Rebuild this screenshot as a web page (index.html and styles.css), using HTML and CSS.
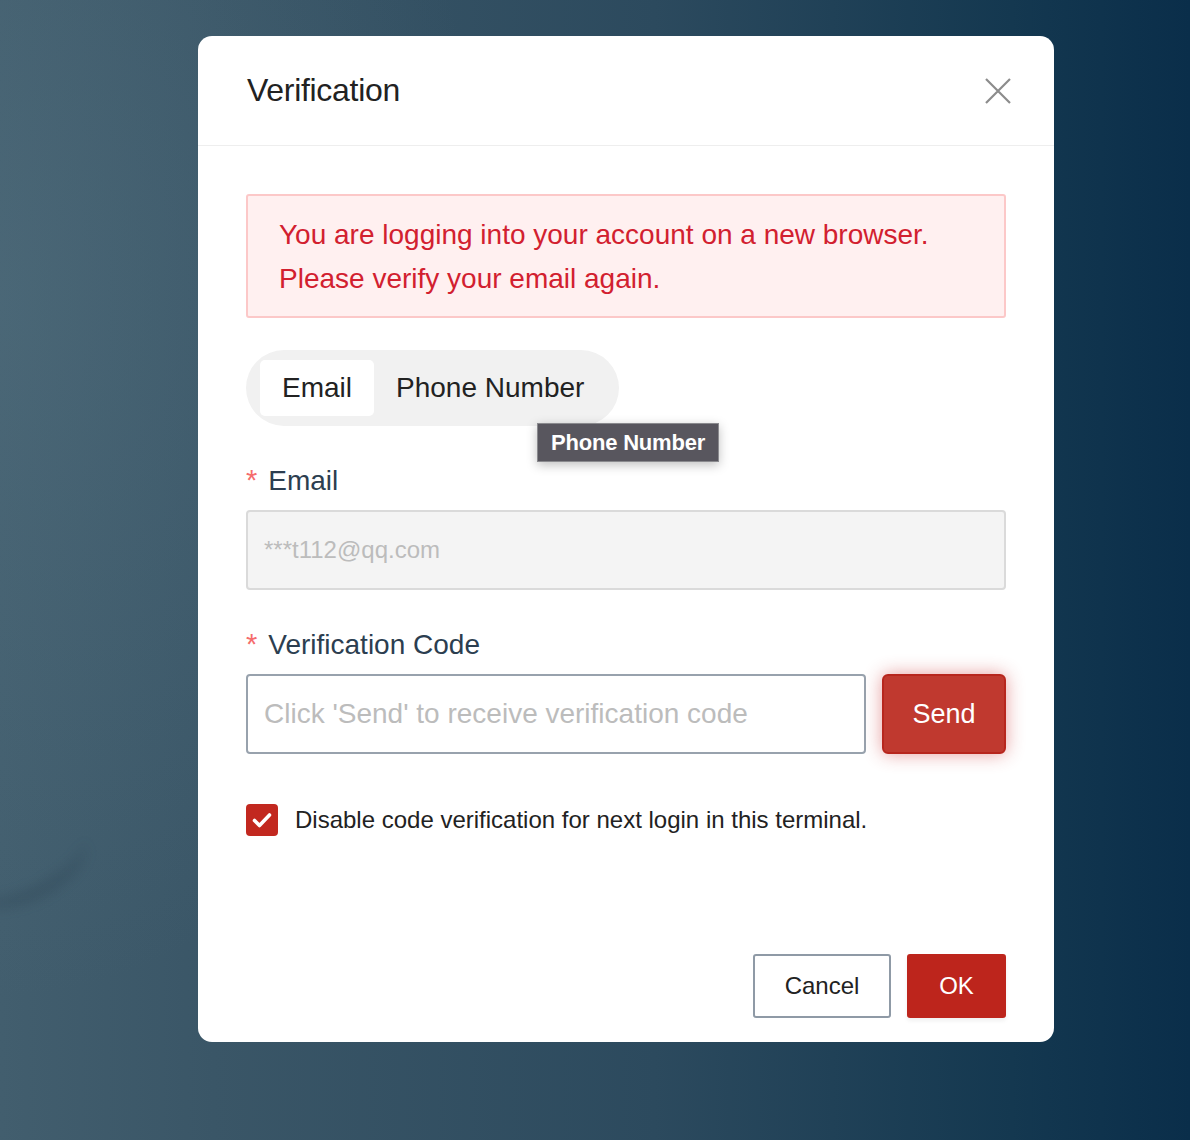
FILE: index.html
```html
<!DOCTYPE html>
<html>
<head>
<meta charset="utf-8">
<link rel="stylesheet" href="styles.css">
</head>
<body>
<div class="backdrop">
  <div class="swoosh"></div>
  <div class="dialog">
    <div class="dialog-header">
      <div class="dialog-title">Verification</div>
      <svg class="close" width="28" height="28" viewBox="0 0 28 28"><path d="M2 2 L26 26 M26 2 L2 26" stroke="#8c8c8c" stroke-width="2.2" fill="none"/></svg>
    </div>
    <div class="dialog-body">
      <div class="alert">You are logging into your account on a new browser.<br>Please verify your email again.</div>
      <div class="tabs-row">
        <div class="tabs">
          <div class="tab active">Email</div>
          <div class="tab">Phone Number</div>
        </div>
        <div class="tooltip">Phone Number</div>
      </div>
      <div class="field">
        <div class="label"><span class="req">*</span>Email</div>
        <div class="input disabled small">***t112@qq.com</div>
      </div>
      <div class="field">
        <div class="label"><span class="req">*</span>Verification Code</div>
        <div class="code-row">
          <div class="input code">Click 'Send' to receive verification code</div>
          <div class="send">Send</div>
        </div>
      </div>
      <div class="check-row">
        <span class="checkbox"><svg width="32" height="32" viewBox="0 0 32 32"><path d="M8.5 16.5 L13.5 21.5 L23.5 11" stroke="#fff" stroke-width="3.6" fill="none" stroke-linecap="round" stroke-linejoin="round"/></svg></span>
        <span class="check-text">Disable code verification for next login in this terminal.</span>
      </div>
    </div>
    <div class="dialog-footer">
      <div class="btn cancel">Cancel</div>
      <div class="btn ok">OK</div>
    </div>
  </div>
</div>
</body>
</html>
```
FILE: styles.css
```css
html, body {
  margin: 0;
  padding: 0;
}
body {
  font-family: "Liberation Sans", Arial, sans-serif;
  width: 1190px;
  height: 1140px;
  overflow: hidden;
}
.backdrop {
  position: relative;
  width: 1190px;
  height: 1140px;
  background:
    radial-gradient(ellipse 500px 700px at 0px 300px, rgba(90,120,135,0.35), rgba(90,120,135,0) 100%),
    linear-gradient(90deg, #425e6e 0%, #3a5667 18%, #2c4a5e 55%, #143850 85%, #0a2e4a 100%);
  display: flex;
  justify-content: flex-start;
  align-items: flex-start;
  padding: 36px 0 0 198px;
  box-sizing: border-box;
}
.swoosh {
  position: absolute;
  left: -40px;
  top: 830px;
  width: 130px;
  height: 60px;
  border-radius: 50%;
  border-bottom: 10px solid rgba(30,50,65,0.3);
  transform: rotate(-25deg);
  filter: blur(7px);
}
.dialog {
  position: relative;
  width: 856px;
  height: 1006px;
  background: #fff;
  border-radius: 14px;
  display: flex;
  flex-direction: column;
}
.dialog-header {
  height: 109px;
  border-bottom: 1px solid #eeeeee;
  display: flex;
  align-items: center;
  justify-content: space-between;
  padding: 0 42px 0 49px;
  flex-shrink: 0;
}
.dialog-title {
  font-size: 32px;
  color: #222;
  letter-spacing: -0.3px;
}
.close {
  display: block;
  margin-top: 1px;
}
.dialog-body {
  padding: 48px 48px 0 48px;
  flex: 1;
  display: flex;
  flex-direction: column;
}
.alert {
  height: 124px;
  box-sizing: border-box;
  border: 2px solid #fcc8c8;
  background: #fff0f0;
  border-radius: 3px;
  color: #d2202f;
  font-size: 28px;
  line-height: 44px;
  padding: 17px 0 0 31px;
}
.tabs-row {
  position: relative;
  margin-top: 32px;
  height: 76px;
}
.tabs {
  display: inline-flex;
  align-items: center;
  background: #f1f1f1;
  border-radius: 38px;
  height: 76px;
  padding: 0 35px 0 14px;
  box-sizing: border-box;
  gap: 22px;
}
.tab {
  font-size: 28px;
  color: #222;
  height: 56px;
  line-height: 56px;
}
.tab.active {
  background: #fff;
  border-radius: 5px;
  padding: 0 22px;
}
.tooltip {
  position: absolute;
  left: 291px;
  top: 73px;
  height: 39px;
  box-sizing: border-box;
  background: #58565e;
  border: 1px solid #8a8a8e;
  color: #fff;
  font-size: 22px;
  font-weight: bold;
  letter-spacing: -0.2px;
  line-height: 37px;
  padding: 0 13px;
  box-shadow: 0 3px 10px rgba(0,0,0,0.25);
  z-index: 2;
}
.field {
  margin-top: 34px;
}
.field + .field {
  margin-top: 34px;
}
.label {
  font-size: 28px;
  color: #2c3e50;
  height: 40px;
  line-height: 40px;
  margin-bottom: 10px;
}
.req {
  color: #f56c6c;
  font-size: 29px;
  margin-right: 11px;
}
.input {
  height: 80px;
  box-sizing: border-box;
  border-radius: 4px;
  padding: 0 18px;
  line-height: 76px;
  color: #bcbcbc;
  font-size: 28px;
  white-space: nowrap;
}
.input.disabled {
  background: #f4f4f4;
  border: 2px solid #dadada;
}
.input.small {
  font-size: 24px;
  padding-left: 16px;
}
.code-row {
  display: flex;
  gap: 16px;
}
.input.code {
  flex: 1;
  border: 2px solid #98a2ad;
  background: #fff;
  padding-left: 16px;
}
.send {
  width: 124px;
  height: 80px;
  box-sizing: border-box;
  background: #c0392f;
  border: 2px solid #b7261d;
  border-radius: 6px;
  color: #fff;
  font-size: 27px;
  line-height: 76px;
  text-align: center;
  box-shadow: 0 0 18px rgba(200, 40, 40, 0.45);
}
.check-row {
  display: flex;
  align-items: center;
  margin-top: 50px;
  gap: 17px;
}
.checkbox {
  width: 32px;
  height: 32px;
  border-radius: 4px;
  background: #c2281f;
  display: block;
}
.checkbox svg {
  display: block;
}
.check-text {
  font-size: 24px;
  color: #222;
}
.dialog-footer {
  display: flex;
  justify-content: flex-end;
  gap: 16px;
  padding: 0 48px 24px 0;
}
.btn {
  height: 64px;
  box-sizing: border-box;
  border-radius: 3px;
  font-size: 24px;
  line-height: 60px;
  text-align: center;
}
.btn.cancel {
  width: 138px;
  border: 2px solid #8f9aa6;
  color: #222;
  background: #fff;
}
.btn.ok {
  width: 99px;
  background: #bd251c;
  border: 2px solid #bd251c;
  color: #fff;
  box-shadow: 0 3px 4px rgba(0,0,0,0.06);
}
```
